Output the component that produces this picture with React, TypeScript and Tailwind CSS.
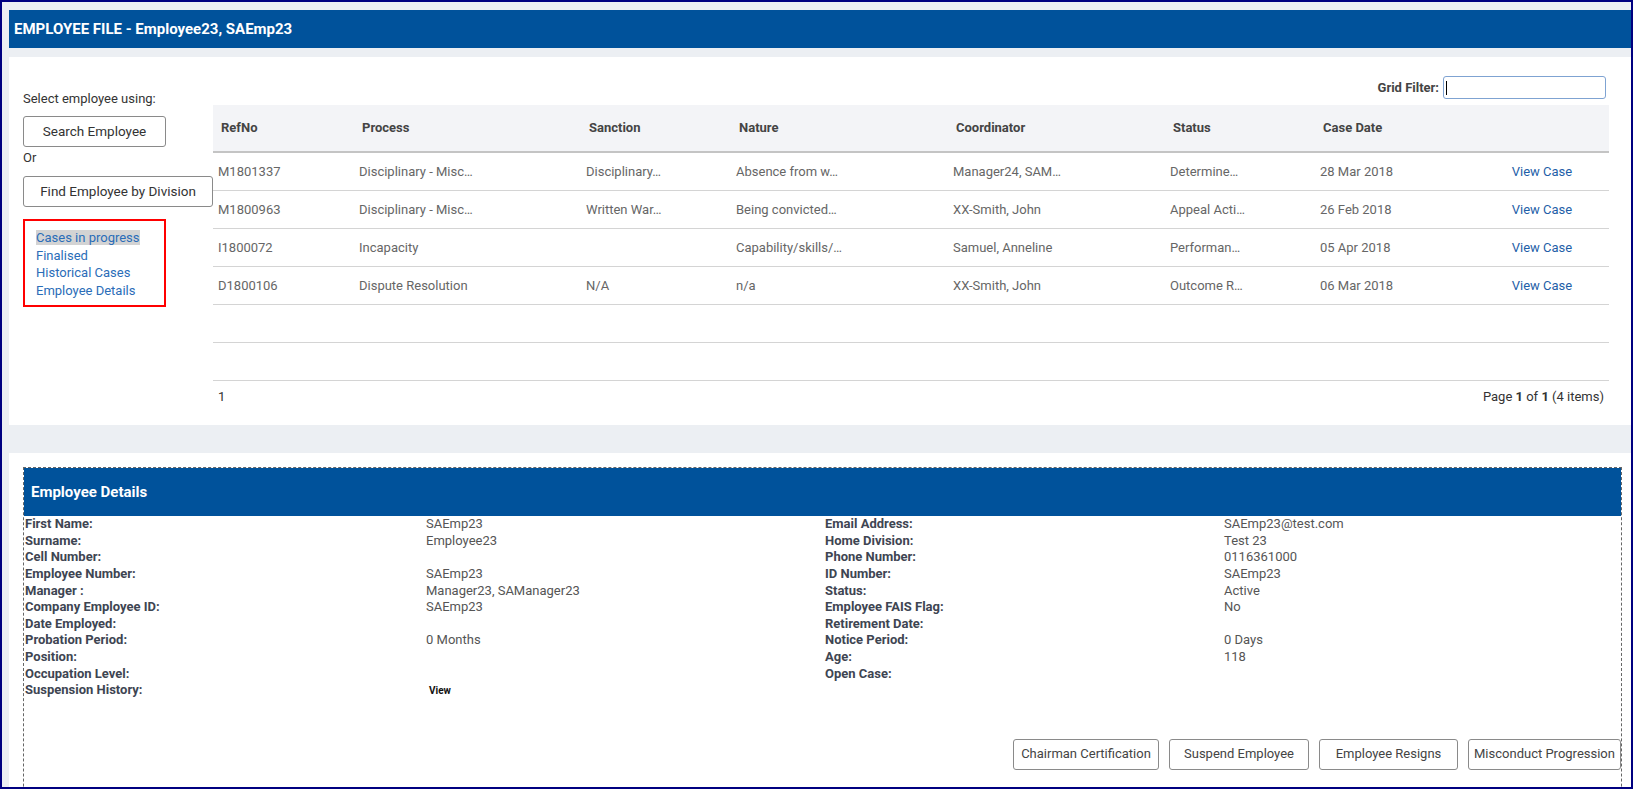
import React from "react";

const cases = [
  ["M1801337", "Disciplinary - Misc…", "Disciplinary…", "Absence from w…", "Manager24, SAM…", "Determine…", "28 Mar 2018"],
  ["M1800963", "Disciplinary - Misc…", "Written War…", "Being convicted…", "XX-Smith, John", "Appeal Acti…", "26 Feb 2018"],
  ["I1800072", "Incapacity", "", "Capability/skills/…", "Samuel, Anneline", "Performan…", "05 Apr 2018"],
  ["D1800106", "Dispute Resolution", "N/A", "n/a", "XX-Smith, John", "Outcome R…", "06 Mar 2018"],
];

const headers = ["RefNo", "Process", "Sanction", "Nature", "Coordinator", "Status", "Case Date", ""];

const details: [string, React.ReactNode, string, string][] = [
  ["First Name:", "SAEmp23", "Email Address:", "SAEmp23@test.com"],
  ["Surname:", "Employee23", "Home Division:", "Test 23"],
  ["Cell Number:", "", "Phone Number:", "0116361000"],
  ["Employee Number:", "SAEmp23", "ID Number:", "SAEmp23"],
  ["Manager :", "Manager23, SAManager23", "Status:", "Active"],
  ["Company Employee ID:", "SAEmp23", "Employee FAIS Flag:", "No"],
  ["Date Employed:", "", "Retirement Date:", ""],
  ["Probation Period:", "0 Months", "Notice Period:", "0 Days"],
  ["Position:", "", "Age:", "118"],
  ["Occupation Level:", "", "Open Case:", ""],
  [
    "Suspension History:",
    <span className="ml-[3px] text-[10px] font-bold text-[#111]">View</span>,
    "",
    "",
  ],
];

const gridCols = "grid grid-cols-[141px_227px_150px_217px_217px_150px_150px_144px]";

export default function App() {
  return (
    <div className="h-[789px] w-[1633px] overflow-hidden border-2 border-[#000080] bg-[#eceff3] font-['Roboto','Liberation_Sans',sans-serif]">
      <div className="pl-[7px] pt-[8px]">
        {/* TITLE BAR */}
        <div className="flex h-[38px] items-center bg-[#00529b] px-[5px] text-[15px] font-bold text-white">
          EMPLOYEE FILE - Employee23, SAEmp23
        </div>

        {/* CASES PANEL */}
        <div className="mt-[9px] flex h-[368px] bg-white">
          <div className="w-[204px] shrink-0 pl-[14px] pt-[34px] text-[13px] text-[#333]">
            <div className="leading-[16px]">Select employee using:</div>
            <button className="mt-[9px] h-[31px] w-[143px] rounded-[3px] border border-[#8a8a8a] bg-white text-[13.5px] text-[#333]">
              Search Employee
            </button>
            <div className="mt-[3px] leading-[16px]">Or</div>
            <button className="mt-[10px] h-[31px] w-[190px] rounded-[3px] border border-[#8a8a8a] bg-white text-[13.5px] text-[#333]">
              Find Employee by Division
            </button>
            <div className="mt-[12px] h-[88px] w-[143px] border-2 border-[#ff0000] pl-[11px] pt-[8px] text-[13px] leading-[17.5px] text-[#2a6db8]">
              <div>
                <span className="bg-[#d3d3d3]">Cases in progress</span>
              </div>
              <div>Finalised</div>
              <div>Historical Cases</div>
              <div>Employee Details</div>
            </div>
          </div>

          <div className="flex-1 pr-[21px]">
            <div className="mt-[19px] flex h-[23px] items-center justify-end">
              <span className="mr-[4px] text-[13px] font-bold text-[#444]">Grid Filter:</span>
              <div className="mr-[4px] flex h-[23px] w-[163px] items-center rounded-[3px] border border-[#7fa3d2] bg-white">
                <span className="ml-[2px] h-[14px] w-px bg-black" />
              </div>
            </div>

            <div className="mt-[6px] w-[1396px]">
              <div className={`${gridCols} h-[48px] items-center border-b-2 border-[#c4c4c4] bg-[#f3f4f7] text-[13px] font-bold text-[#444]`}>
                {headers.map((h, i) => (
                  <div key={i} className="px-[8px]">
                    {h}
                  </div>
                ))}
              </div>
              {cases.map((row) => (
                <div key={row[0]} className={`${gridCols} h-[38px] items-center border-b border-[#d4d4d4] text-[13px] text-[#666]`}>
                  {row.map((c, i) => (
                    <div key={i} className="truncate px-[5px]">
                      {c}
                    </div>
                  ))}
                  <div className="pl-[10px] text-center text-[#1f5fa8]">View Case</div>
                </div>
              ))}
              <div className="h-[38px] border-b border-[#d4d4d4]" />
              <div className="h-[38px] border-b border-[#d4d4d4]" />
              <div className="flex h-[32px] items-center justify-between px-[5px] text-[13px] text-[#333]">
                <span>1</span>
                <span>
                  Page <b>1</b> of <b>1</b> (4 items)
                </span>
              </div>
            </div>
          </div>
        </div>

        {/* EMPLOYEE DETAILS PANEL */}
        <div className="mt-[28px] bg-white pl-[14px] pr-[9px] pt-[14px]">
          <div className="h-[400px] border border-dashed border-[#666]">
            <div className="flex h-[48px] items-center bg-[#00529b] pl-[7px] text-[15px] font-bold text-white">
              Employee Details
            </div>
            {details.map(([l1, v1, l2, v2], i) => (
              <div key={i} className="grid h-[16.6px] grid-cols-4 items-center pl-[1px] text-[13px] leading-[16px]">
                <div className="font-bold text-[#3e4552]">{l1}</div>
                <div className="pl-[2px] text-[#555]">{v1}</div>
                <div className="pl-[2px] font-bold text-[#3e4552]">{l2}</div>
                <div className="pl-[2px] text-[#555]">{v2}</div>
              </div>
            ))}
            <div className="mt-[40px] flex justify-end gap-[10px] text-[13px] text-[#444]">
              <button className="h-[31px] w-[146px] rounded-[3px] border border-[#8a8a8a] bg-white">Chairman Certification</button>
              <button className="h-[31px] w-[140px] rounded-[3px] border border-[#8a8a8a] bg-white">Suspend Employee</button>
              <button className="h-[31px] w-[139px] rounded-[3px] border border-[#8a8a8a] bg-white">Employee Resigns</button>
              <button className="h-[31px] w-[153px] rounded-[3px] border border-[#8a8a8a] bg-white">Misconduct Progression</button>
            </div>
          </div>
        </div>
      </div>
    </div>
  );
}
